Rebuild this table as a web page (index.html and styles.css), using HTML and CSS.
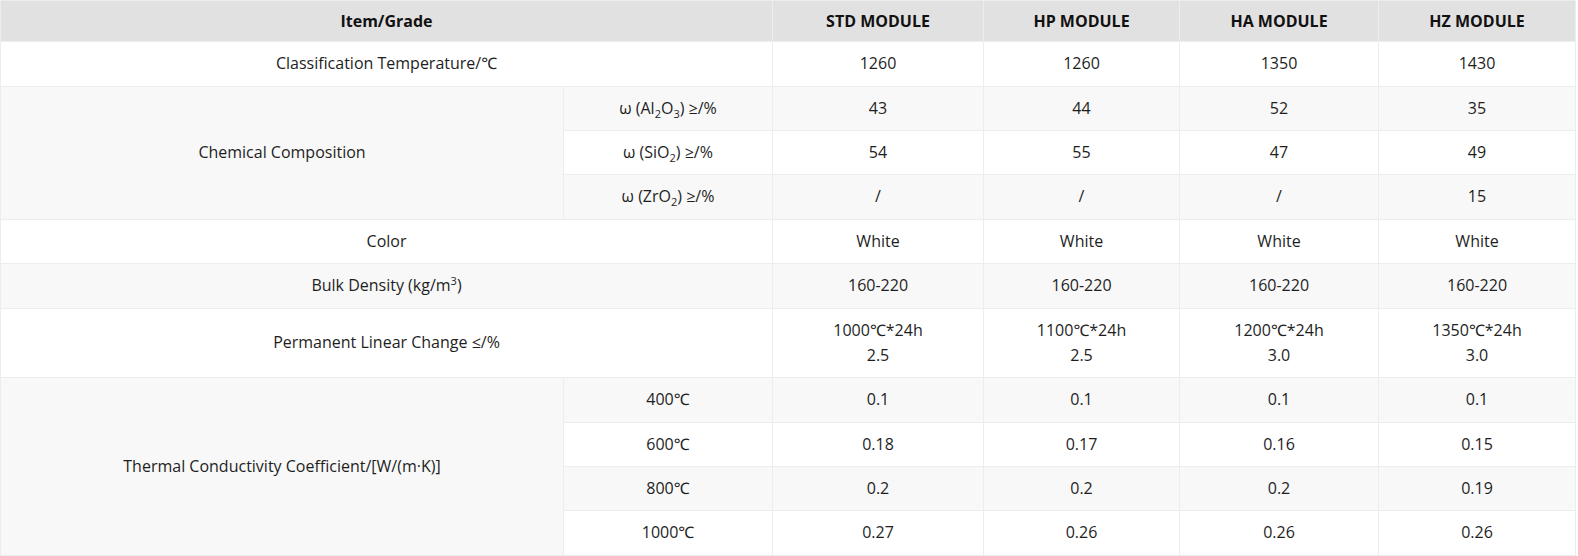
FILE: index.html
```html
<!DOCTYPE html>
<html lang="en">
<head>
<meta charset="utf-8">
<title>Module Specifications</title>
<link rel="stylesheet" href="styles.css">
</head>
<body>
<table class="spec">
  <colgroup>
    <col class="c-item">
    <col class="c-sub">
    <col class="c-std">
    <col class="c-hp">
    <col class="c-ha">
    <col class="c-hz">
  </colgroup>
  <thead>
    <tr>
      <th colspan="2">Item/Grade</th>
      <th>STD MODULE</th>
      <th>HP MODULE</th>
      <th>HA MODULE</th>
      <th>HZ MODULE</th>
    </tr>
  </thead>
  <tbody>
    <tr>
      <td colspan="2">Classification Temperature/℃</td>
      <td>1260</td><td>1260</td><td>1350</td><td>1430</td>
    </tr>
    <tr>
      <td rowspan="3">Chemical Composition</td>
      <td>ω (Al<sub>2</sub>O<sub>3</sub>) ≥/%</td>
      <td>43</td><td>44</td><td>52</td><td>35</td>
    </tr>
    <tr>
      <td>ω (SiO<sub>2</sub>) ≥/%</td>
      <td>54</td><td>55</td><td>47</td><td>49</td>
    </tr>
    <tr>
      <td>ω (ZrO<sub>2</sub>) ≥/%</td>
      <td>/</td><td>/</td><td>/</td><td>15</td>
    </tr>
    <tr>
      <td colspan="2">Color</td>
      <td>White</td><td>White</td><td>White</td><td>White</td>
    </tr>
    <tr>
      <td colspan="2">Bulk Density (kg/m<sup>3</sup>)</td>
      <td>160-220</td><td>160-220</td><td>160-220</td><td>160-220</td>
    </tr>
    <tr>
      <td colspan="2">Permanent Linear Change ≤/%</td>
      <td>1000℃*24h<br>2.5</td>
      <td>1100℃*24h<br>2.5</td>
      <td>1200℃*24h<br>3.0</td>
      <td>1350℃*24h<br>3.0</td>
    </tr>
    <tr>
      <td rowspan="4">Thermal Conductivity Coefficient/[W/(m·K)]</td>
      <td>400℃</td>
      <td>0.1</td><td>0.1</td><td>0.1</td><td>0.1</td>
    </tr>
    <tr>
      <td>600℃</td>
      <td>0.18</td><td>0.17</td><td>0.16</td><td>0.15</td>
    </tr>
    <tr>
      <td>800℃</td>
      <td>0.2</td><td>0.2</td><td>0.2</td><td>0.19</td>
    </tr>
    <tr>
      <td>1000℃</td>
      <td>0.27</td><td>0.26</td><td>0.26</td><td>0.26</td>
    </tr>
  </tbody>
</table>
</body>
</html>
```

FILE: styles.css
```css
html, body {
  margin: 0;
  padding: 0;
  background: #ffffff;
}

.spec {
  width: 1575px;
  border-collapse: collapse;
  table-layout: fixed;
  font-family: "Open Sans", "Noto Sans", sans-serif;
  font-size: 16px;
  color: #1e1e1e;
}

.c-item { width: 563px; }
.c-sub { width: 209px; }
.c-std { width: 211px; }
.c-hp { width: 196px; }
.c-ha { width: 199px; }
.c-hz { width: 197px; }

.spec th,
.spec td {
  border: 1px solid #ededed;
  text-align: center;
  vertical-align: middle;
  line-height: 25.2px;
}

.spec th {
  background: #e1e1e1;
  font-weight: 700;
  color: #111111;
  padding: 7.5px 10px;
}

.spec td {
  padding: 9.1px 10px;
}

.spec tbody tr:nth-child(odd) td {
  background: #ffffff;
}

.spec tbody tr:nth-child(even) td {
  background: #f8f8f8;
}

.spec sub,
.spec sup {
  font-size: 11px;
  line-height: 0;
}
```
